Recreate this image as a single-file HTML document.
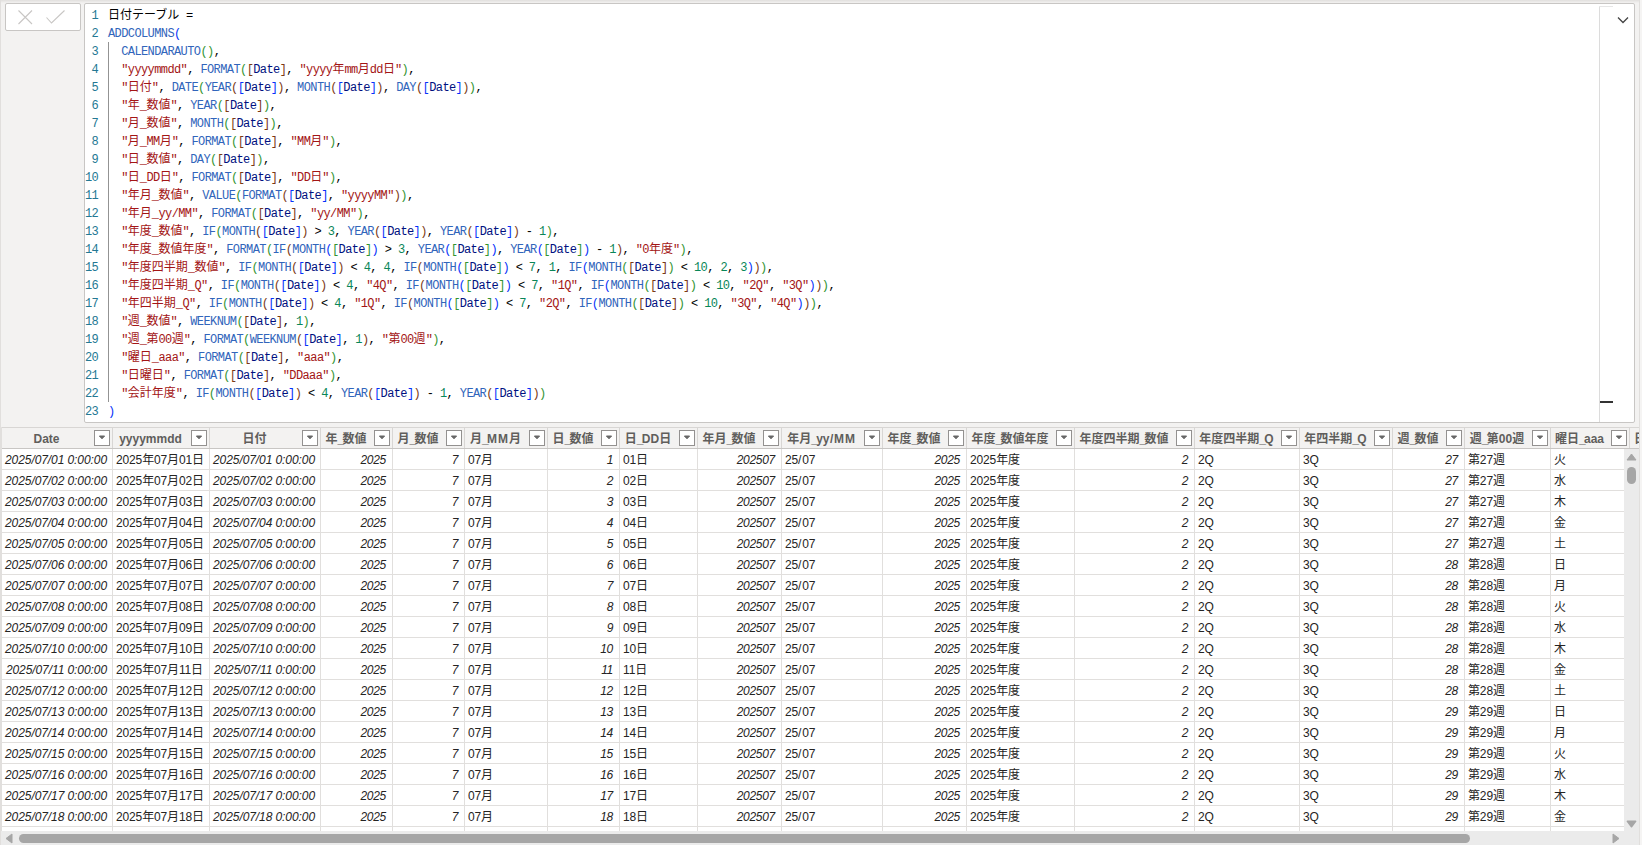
<!DOCTYPE html>
<html lang="ja"><head><meta charset="utf-8"><title>日付テーブル</title>
<style>
*{box-sizing:border-box;margin:0;padding:0}
html,body{width:1642px;height:845px;overflow:hidden;background:#f3f2f1}
body{position:relative;font-family:"Liberation Sans","Noto Sans CJK JP",sans-serif;font-size:12px;color:#252423}
.abs{position:absolute}
#topgrad{left:0;top:0;width:1642px;height:3px;background:linear-gradient(#e1dfdd,#f3f2f1)}
#lstrip{left:0;top:0;width:1px;height:845px;background:#e1dfdd}
#rstrip{left:1639px;top:0;width:1px;height:845px;background:#e1dfdd}
#rstrip2{left:1640px;top:0;width:2px;height:845px;background:#f5f4f3}
#btnbox{left:5px;top:3px;width:76px;height:28px;background:#fff;border:1px solid #c8c6c4;border-radius:2px}
#editor{left:84px;top:3px;width:1551px;height:420px;background:#fff;border:1px solid #c8c6c4;border-radius:2px;overflow:hidden}
.ln{position:absolute;left:0;width:13px;text-align:right;color:#237893}
.cl{position:absolute;left:23px;white-space:pre;color:#000}
.code{font-family:"Liberation Mono","Noto Sans CJK JP",monospace;font-size:12px;letter-spacing:-0.6px;line-height:18px;height:18px}
.code .j{letter-spacing:0;line-height:0;font-family:"Noto Sans CJK JP",sans-serif}
.f{color:#3165bb}.s{color:#a31515}.n{color:#098658}.c{color:#001080}.k{color:#000}
.b1{color:#0431fa}.b2{color:#319331}.b3{color:#7b3814}
#guide{left:23px;top:38px;width:1px;height:360px;background:#939393}
#ruler{left:1514px;top:2px;width:1px;height:417px;background:#dcdcdc}
#rulertop{left:1514px;top:2px;width:14px;height:1px;background:#e6e6e6}
#cursor{left:1515px;top:397px;width:13px;height:2px;background:#333}
#grid{left:1px;top:427px;width:1638px;height:404px;overflow:hidden;background:#fff;border-left:1px solid #e1dfdd}
.hrow{position:absolute;left:0;top:0;width:1638px;height:22px;background:#f3f2f1;border-top:1px solid #d8d6d4;border-bottom:1px solid #c8c6c4}
.hc{position:absolute;top:1px;height:20px;line-height:20px;font-weight:bold;color:#605e5c;white-space:nowrap;overflow:hidden;text-align:center}
.hb{position:absolute;top:0;width:1px;height:20px;background:#d8d6d4}
.dd{position:absolute;top:2px;width:16px;height:16px;background:#fff;border:1px solid #939190}
.dd svg{position:absolute;left:3px;top:4px}
.row{position:absolute;left:0;width:1623px;height:21px;border-bottom:1px solid #e1dfdd}
.c_{position:absolute;top:0;height:20px;line-height:22px;white-space:nowrap;overflow:hidden;border-right:1px solid #e1dfdd}
.r{text-align:right;font-style:italic;padding-right:5px;letter-spacing:-0.08px}
.r.num{padding-right:6px;letter-spacing:-0.3px}
.hc u{text-decoration:none;letter-spacing:-1.7px}.hc b{letter-spacing:0.6px;margin-left:0.6px}.hc i{font-style:normal;letter-spacing:0.9px}.l b{font-weight:normal;letter-spacing:0.8px}
.l{text-align:left;padding-left:3px;letter-spacing:-0.14px}
#vsb{left:1624px;top:449px;width:15px;height:382px;background:#ebebeb}
#hsb{left:1px;top:831px;width:1638px;height:14px;background:#ebebeb}
.thumb{position:absolute;background:#a6a6a6;border-radius:5px}
</style></head><body>
<div class="abs" id="topgrad"></div><div class="abs" id="lstrip"></div><div class="abs" id="rstrip"></div><div class="abs" id="rstrip2"></div>
<div class="abs" id="btnbox">
<svg class="abs" style="left:0;top:0" width="74" height="26" viewBox="0 0 74 26"><g stroke="#c8c6c4" stroke-width="1.1" fill="none"><path d="M12.5 6.5 L26 20 M26 6.5 L12.5 20"/><path d="M40.5 13.5 L45.5 19 L58.5 6.5"/></g></svg>
</div>
<div class="abs" id="editor">
<div class="ln code" style="top:3px">1</div><div class="cl code" style="top:3px"><span class="k"><span class="j">日付テーブル</span> =</span></div>
<div class="ln code" style="top:21px">2</div><div class="cl code" style="top:21px"><span class="f">ADDCOLUMNS</span><span class="b1">(</span></div>
<div class="ln code" style="top:39px">3</div><div class="cl code" style="top:39px">  <span class="f">CALENDARAUTO</span><span class="b2">(</span><span class="b2">)</span>,</div>
<div class="ln code" style="top:57px">4</div><div class="cl code" style="top:57px">  <span class="s">&quot;yyyymmdd&quot;</span>, <span class="f">FORMAT</span><span class="b2">(</span><span class="b3">[</span><span class="c">Date</span><span class="b3">]</span>, <span class="s">&quot;yyyy<span class="j">年</span>mm<span class="j">月</span>dd<span class="j">日</span>&quot;</span><span class="b2">)</span>,</div>
<div class="ln code" style="top:75px">5</div><div class="cl code" style="top:75px">  <span class="s">&quot;<span class="j">日付</span>&quot;</span>, <span class="f">DATE</span><span class="b2">(</span><span class="f">YEAR</span><span class="b3">(</span><span class="b1">[</span><span class="c">Date</span><span class="b1">]</span><span class="b3">)</span>, <span class="f">MONTH</span><span class="b3">(</span><span class="b1">[</span><span class="c">Date</span><span class="b1">]</span><span class="b3">)</span>, <span class="f">DAY</span><span class="b3">(</span><span class="b1">[</span><span class="c">Date</span><span class="b1">]</span><span class="b3">)</span><span class="b2">)</span>,</div>
<div class="ln code" style="top:93px">6</div><div class="cl code" style="top:93px">  <span class="s">&quot;<span class="j">年</span>_<span class="j">数値</span>&quot;</span>, <span class="f">YEAR</span><span class="b2">(</span><span class="b3">[</span><span class="c">Date</span><span class="b3">]</span><span class="b2">)</span>,</div>
<div class="ln code" style="top:111px">7</div><div class="cl code" style="top:111px">  <span class="s">&quot;<span class="j">月</span>_<span class="j">数値</span>&quot;</span>, <span class="f">MONTH</span><span class="b2">(</span><span class="b3">[</span><span class="c">Date</span><span class="b3">]</span><span class="b2">)</span>,</div>
<div class="ln code" style="top:129px">8</div><div class="cl code" style="top:129px">  <span class="s">&quot;<span class="j">月</span>_MM<span class="j">月</span>&quot;</span>, <span class="f">FORMAT</span><span class="b2">(</span><span class="b3">[</span><span class="c">Date</span><span class="b3">]</span>, <span class="s">&quot;MM<span class="j">月</span>&quot;</span><span class="b2">)</span>,</div>
<div class="ln code" style="top:147px">9</div><div class="cl code" style="top:147px">  <span class="s">&quot;<span class="j">日</span>_<span class="j">数値</span>&quot;</span>, <span class="f">DAY</span><span class="b2">(</span><span class="b3">[</span><span class="c">Date</span><span class="b3">]</span><span class="b2">)</span>,</div>
<div class="ln code" style="top:165px">10</div><div class="cl code" style="top:165px">  <span class="s">&quot;<span class="j">日</span>_DD<span class="j">日</span>&quot;</span>, <span class="f">FORMAT</span><span class="b2">(</span><span class="b3">[</span><span class="c">Date</span><span class="b3">]</span>, <span class="s">&quot;DD<span class="j">日</span>&quot;</span><span class="b2">)</span>,</div>
<div class="ln code" style="top:183px">11</div><div class="cl code" style="top:183px">  <span class="s">&quot;<span class="j">年月</span>_<span class="j">数値</span>&quot;</span>, <span class="f">VALUE</span><span class="b2">(</span><span class="f">FORMAT</span><span class="b3">(</span><span class="b1">[</span><span class="c">Date</span><span class="b1">]</span>, <span class="s">&quot;yyyyMM&quot;</span><span class="b3">)</span><span class="b2">)</span>,</div>
<div class="ln code" style="top:201px">12</div><div class="cl code" style="top:201px">  <span class="s">&quot;<span class="j">年月</span>_yy/MM&quot;</span>, <span class="f">FORMAT</span><span class="b2">(</span><span class="b3">[</span><span class="c">Date</span><span class="b3">]</span>, <span class="s">&quot;yy/MM&quot;</span><span class="b2">)</span>,</div>
<div class="ln code" style="top:219px">13</div><div class="cl code" style="top:219px">  <span class="s">&quot;<span class="j">年度</span>_<span class="j">数値</span>&quot;</span>, <span class="f">IF</span><span class="b2">(</span><span class="f">MONTH</span><span class="b3">(</span><span class="b1">[</span><span class="c">Date</span><span class="b1">]</span><span class="b3">)</span> &gt; <span class="n">3</span>, <span class="f">YEAR</span><span class="b3">(</span><span class="b1">[</span><span class="c">Date</span><span class="b1">]</span><span class="b3">)</span>, <span class="f">YEAR</span><span class="b3">(</span><span class="b1">[</span><span class="c">Date</span><span class="b1">]</span><span class="b3">)</span> - <span class="n">1</span><span class="b2">)</span>,</div>
<div class="ln code" style="top:237px">14</div><div class="cl code" style="top:237px">  <span class="s">&quot;<span class="j">年度</span>_<span class="j">数値年度</span>&quot;</span>, <span class="f">FORMAT</span><span class="b2">(</span><span class="f">IF</span><span class="b3">(</span><span class="f">MONTH</span><span class="b1">(</span><span class="b2">[</span><span class="c">Date</span><span class="b2">]</span><span class="b1">)</span> &gt; <span class="n">3</span>, <span class="f">YEAR</span><span class="b1">(</span><span class="b2">[</span><span class="c">Date</span><span class="b2">]</span><span class="b1">)</span>, <span class="f">YEAR</span><span class="b1">(</span><span class="b2">[</span><span class="c">Date</span><span class="b2">]</span><span class="b1">)</span> - <span class="n">1</span><span class="b3">)</span>, <span class="s">&quot;0<span class="j">年度</span>&quot;</span><span class="b2">)</span>,</div>
<div class="ln code" style="top:255px">15</div><div class="cl code" style="top:255px">  <span class="s">&quot;<span class="j">年度四半期</span>_<span class="j">数値</span>&quot;</span>, <span class="f">IF</span><span class="b2">(</span><span class="f">MONTH</span><span class="b3">(</span><span class="b1">[</span><span class="c">Date</span><span class="b1">]</span><span class="b3">)</span> &lt; <span class="n">4</span>, <span class="n">4</span>, <span class="f">IF</span><span class="b3">(</span><span class="f">MONTH</span><span class="b1">(</span><span class="b2">[</span><span class="c">Date</span><span class="b2">]</span><span class="b1">)</span> &lt; <span class="n">7</span>, <span class="n">1</span>, <span class="f">IF</span><span class="b1">(</span><span class="f">MONTH</span><span class="b2">(</span><span class="b3">[</span><span class="c">Date</span><span class="b3">]</span><span class="b2">)</span> &lt; <span class="n">10</span>, <span class="n">2</span>, <span class="n">3</span><span class="b1">)</span><span class="b3">)</span><span class="b2">)</span>,</div>
<div class="ln code" style="top:273px">16</div><div class="cl code" style="top:273px">  <span class="s">&quot;<span class="j">年度四半期</span>_Q&quot;</span>, <span class="f">IF</span><span class="b2">(</span><span class="f">MONTH</span><span class="b3">(</span><span class="b1">[</span><span class="c">Date</span><span class="b1">]</span><span class="b3">)</span> &lt; <span class="n">4</span>, <span class="s">&quot;4Q&quot;</span>, <span class="f">IF</span><span class="b3">(</span><span class="f">MONTH</span><span class="b1">(</span><span class="b2">[</span><span class="c">Date</span><span class="b2">]</span><span class="b1">)</span> &lt; <span class="n">7</span>, <span class="s">&quot;1Q&quot;</span>, <span class="f">IF</span><span class="b1">(</span><span class="f">MONTH</span><span class="b2">(</span><span class="b3">[</span><span class="c">Date</span><span class="b3">]</span><span class="b2">)</span> &lt; <span class="n">10</span>, <span class="s">&quot;2Q&quot;</span>, <span class="s">&quot;3Q&quot;</span><span class="b1">)</span><span class="b3">)</span><span class="b2">)</span>,</div>
<div class="ln code" style="top:291px">17</div><div class="cl code" style="top:291px">  <span class="s">&quot;<span class="j">年四半期</span>_Q&quot;</span>, <span class="f">IF</span><span class="b2">(</span><span class="f">MONTH</span><span class="b3">(</span><span class="b1">[</span><span class="c">Date</span><span class="b1">]</span><span class="b3">)</span> &lt; <span class="n">4</span>, <span class="s">&quot;1Q&quot;</span>, <span class="f">IF</span><span class="b3">(</span><span class="f">MONTH</span><span class="b1">(</span><span class="b2">[</span><span class="c">Date</span><span class="b2">]</span><span class="b1">)</span> &lt; <span class="n">7</span>, <span class="s">&quot;2Q&quot;</span>, <span class="f">IF</span><span class="b1">(</span><span class="f">MONTH</span><span class="b2">(</span><span class="b3">[</span><span class="c">Date</span><span class="b3">]</span><span class="b2">)</span> &lt; <span class="n">10</span>, <span class="s">&quot;3Q&quot;</span>, <span class="s">&quot;4Q&quot;</span><span class="b1">)</span><span class="b3">)</span><span class="b2">)</span>,</div>
<div class="ln code" style="top:309px">18</div><div class="cl code" style="top:309px">  <span class="s">&quot;<span class="j">週</span>_<span class="j">数値</span>&quot;</span>, <span class="f">WEEKNUM</span><span class="b2">(</span><span class="b3">[</span><span class="c">Date</span><span class="b3">]</span>, <span class="n">1</span><span class="b2">)</span>,</div>
<div class="ln code" style="top:327px">19</div><div class="cl code" style="top:327px">  <span class="s">&quot;<span class="j">週</span>_<span class="j">第</span>00<span class="j">週</span>&quot;</span>, <span class="f">FORMAT</span><span class="b2">(</span><span class="f">WEEKNUM</span><span class="b3">(</span><span class="b1">[</span><span class="c">Date</span><span class="b1">]</span>, <span class="n">1</span><span class="b3">)</span>, <span class="s">&quot;<span class="j">第</span>00<span class="j">週</span>&quot;</span><span class="b2">)</span>,</div>
<div class="ln code" style="top:345px">20</div><div class="cl code" style="top:345px">  <span class="s">&quot;<span class="j">曜日</span>_aaa&quot;</span>, <span class="f">FORMAT</span><span class="b2">(</span><span class="b3">[</span><span class="c">Date</span><span class="b3">]</span>, <span class="s">&quot;aaa&quot;</span><span class="b2">)</span>,</div>
<div class="ln code" style="top:363px">21</div><div class="cl code" style="top:363px">  <span class="s">&quot;<span class="j">日曜日</span>&quot;</span>, <span class="f">FORMAT</span><span class="b2">(</span><span class="b3">[</span><span class="c">Date</span><span class="b3">]</span>, <span class="s">&quot;DDaaa&quot;</span><span class="b2">)</span>,</div>
<div class="ln code" style="top:381px">22</div><div class="cl code" style="top:381px">  <span class="s">&quot;<span class="j">会計年度</span>&quot;</span>, <span class="f">IF</span><span class="b2">(</span><span class="f">MONTH</span><span class="b3">(</span><span class="b1">[</span><span class="c">Date</span><span class="b1">]</span><span class="b3">)</span> &lt; <span class="n">4</span>, <span class="f">YEAR</span><span class="b3">(</span><span class="b1">[</span><span class="c">Date</span><span class="b1">]</span><span class="b3">)</span> - <span class="n">1</span>, <span class="f">YEAR</span><span class="b3">(</span><span class="b1">[</span><span class="c">Date</span><span class="b1">]</span><span class="b3">)</span><span class="b2">)</span></div>
<div class="ln code" style="top:399px">23</div><div class="cl code" style="top:399px"><span class="b1">)</span></div>
<div class="abs" id="guide"></div><div class="abs" id="ruler"></div><div class="abs" id="rulertop"></div><div class="abs" id="cursor"></div>
<svg class="abs" style="left:1531px;top:11px" width="14" height="10" viewBox="0 0 14 10"><path d="M2 2.5 L7 7.5 L12 2.5" stroke="#444" stroke-width="1.3" fill="none"/></svg>
</div>
<div class="abs" id="grid">
<div class="hrow">
<div class="hc" style="left:0px;width:89px">Date</div><div class="dd" style="left:92px"><svg width="8" height="5" viewBox="0 0 8 5"><path d="M1.4 1 L6.6 1 L4 3.8 Z" fill="#666" stroke="#666" stroke-width="1" stroke-linejoin="round"/></svg></div><div class="hb" style="left:110px"></div>
<div class="hc" style="left:111px;width:75px">yyyymmdd</div><div class="dd" style="left:189px"><svg width="8" height="5" viewBox="0 0 8 5"><path d="M1.4 1 L6.6 1 L4 3.8 Z" fill="#666" stroke="#666" stroke-width="1" stroke-linejoin="round"/></svg></div><div class="hb" style="left:207px"></div>
<div class="hc" style="left:208px;width:89px">日付</div><div class="dd" style="left:300px"><svg width="8" height="5" viewBox="0 0 8 5"><path d="M1.4 1 L6.6 1 L4 3.8 Z" fill="#666" stroke="#666" stroke-width="1" stroke-linejoin="round"/></svg></div><div class="hb" style="left:318px"></div>
<div class="hc" style="left:319px;width:50px">年<u>_</u>数値</div><div class="dd" style="left:372px"><svg width="8" height="5" viewBox="0 0 8 5"><path d="M1.4 1 L6.6 1 L4 3.8 Z" fill="#666" stroke="#666" stroke-width="1" stroke-linejoin="round"/></svg></div><div class="hb" style="left:390px"></div>
<div class="hc" style="left:391px;width:50px">月<u>_</u>数値</div><div class="dd" style="left:444px"><svg width="8" height="5" viewBox="0 0 8 5"><path d="M1.4 1 L6.6 1 L4 3.8 Z" fill="#666" stroke="#666" stroke-width="1" stroke-linejoin="round"/></svg></div><div class="hb" style="left:462px"></div>
<div class="hc" style="left:463px;width:61px">月<u>_</u><i>M</i><i>M</i>月</div><div class="dd" style="left:527px"><svg width="8" height="5" viewBox="0 0 8 5"><path d="M1.4 1 L6.6 1 L4 3.8 Z" fill="#666" stroke="#666" stroke-width="1" stroke-linejoin="round"/></svg></div><div class="hb" style="left:545px"></div>
<div class="hc" style="left:546px;width:50px">日<u>_</u>数値</div><div class="dd" style="left:599px"><svg width="8" height="5" viewBox="0 0 8 5"><path d="M1.4 1 L6.6 1 L4 3.8 Z" fill="#666" stroke="#666" stroke-width="1" stroke-linejoin="round"/></svg></div><div class="hb" style="left:617px"></div>
<div class="hc" style="left:618px;width:56px">日<u>_</u>DD日</div><div class="dd" style="left:677px"><svg width="8" height="5" viewBox="0 0 8 5"><path d="M1.4 1 L6.6 1 L4 3.8 Z" fill="#666" stroke="#666" stroke-width="1" stroke-linejoin="round"/></svg></div><div class="hb" style="left:695px"></div>
<div class="hc" style="left:696px;width:62px">年月<u>_</u>数値</div><div class="dd" style="left:761px"><svg width="8" height="5" viewBox="0 0 8 5"><path d="M1.4 1 L6.6 1 L4 3.8 Z" fill="#666" stroke="#666" stroke-width="1" stroke-linejoin="round"/></svg></div><div class="hb" style="left:779px"></div>
<div class="hc" style="left:780px;width:79px">年月<u>_</u>yy<b>/</b><i>M</i><i>M</i></div><div class="dd" style="left:862px"><svg width="8" height="5" viewBox="0 0 8 5"><path d="M1.4 1 L6.6 1 L4 3.8 Z" fill="#666" stroke="#666" stroke-width="1" stroke-linejoin="round"/></svg></div><div class="hb" style="left:880px"></div>
<div class="hc" style="left:881px;width:62px">年度<u>_</u>数値</div><div class="dd" style="left:946px"><svg width="8" height="5" viewBox="0 0 8 5"><path d="M1.4 1 L6.6 1 L4 3.8 Z" fill="#666" stroke="#666" stroke-width="1" stroke-linejoin="round"/></svg></div><div class="hb" style="left:964px"></div>
<div class="hc" style="left:965px;width:86px">年度<u>_</u>数値年度</div><div class="dd" style="left:1054px"><svg width="8" height="5" viewBox="0 0 8 5"><path d="M1.4 1 L6.6 1 L4 3.8 Z" fill="#666" stroke="#666" stroke-width="1" stroke-linejoin="round"/></svg></div><div class="hb" style="left:1072px"></div>
<div class="hc" style="left:1073px;width:98px">年度四半期<u>_</u>数値</div><div class="dd" style="left:1174px"><svg width="8" height="5" viewBox="0 0 8 5"><path d="M1.4 1 L6.6 1 L4 3.8 Z" fill="#666" stroke="#666" stroke-width="1" stroke-linejoin="round"/></svg></div><div class="hb" style="left:1192px"></div>
<div class="hc" style="left:1193px;width:83px">年度四半期<u>_</u>Q</div><div class="dd" style="left:1279px"><svg width="8" height="5" viewBox="0 0 8 5"><path d="M1.4 1 L6.6 1 L4 3.8 Z" fill="#666" stroke="#666" stroke-width="1" stroke-linejoin="round"/></svg></div><div class="hb" style="left:1297px"></div>
<div class="hc" style="left:1298px;width:71px">年四半期<u>_</u>Q</div><div class="dd" style="left:1372px"><svg width="8" height="5" viewBox="0 0 8 5"><path d="M1.4 1 L6.6 1 L4 3.8 Z" fill="#666" stroke="#666" stroke-width="1" stroke-linejoin="round"/></svg></div><div class="hb" style="left:1390px"></div>
<div class="hc" style="left:1391px;width:50px">週<u>_</u>数値</div><div class="dd" style="left:1444px"><svg width="8" height="5" viewBox="0 0 8 5"><path d="M1.4 1 L6.6 1 L4 3.8 Z" fill="#666" stroke="#666" stroke-width="1" stroke-linejoin="round"/></svg></div><div class="hb" style="left:1462px"></div>
<div class="hc" style="left:1463px;width:64px">週<u>_</u>第00週</div><div class="dd" style="left:1530px"><svg width="8" height="5" viewBox="0 0 8 5"><path d="M1.4 1 L6.6 1 L4 3.8 Z" fill="#666" stroke="#666" stroke-width="1" stroke-linejoin="round"/></svg></div><div class="hb" style="left:1548px"></div>
<div class="hc" style="left:1549px;width:57px">曜日<u>_</u>aaa</div><div class="dd" style="left:1609px"><svg width="8" height="5" viewBox="0 0 8 5"><path d="M1.4 1 L6.6 1 L4 3.8 Z" fill="#666" stroke="#666" stroke-width="1" stroke-linejoin="round"/></svg></div><div class="hb" style="left:1627px"></div>
<div class="hc" style="left:1628px;width:9px;text-align:left;padding-left:4px">日曜日</div></div>
<div class="row" style="top:22px"><div class="c_ r" style="left:0px;width:111px">2025/07/01 0:00:00</div><div class="c_ l" style="left:111px;width:97px">2025年07月01日</div><div class="c_ r" style="left:208px;width:111px">2025/07/01 0:00:00</div><div class="c_ r num" style="left:319px;width:72px">2025</div><div class="c_ r num" style="left:391px;width:72px">7</div><div class="c_ l" style="left:463px;width:83px">07月</div><div class="c_ r num" style="left:546px;width:72px">1</div><div class="c_ l" style="left:618px;width:78px">01日</div><div class="c_ r num" style="left:696px;width:84px">202507</div><div class="c_ l" style="left:780px;width:101px">25<b>/</b>07</div><div class="c_ r num" style="left:881px;width:84px">2025</div><div class="c_ l" style="left:965px;width:108px">2025年度</div><div class="c_ r num" style="left:1073px;width:120px">2</div><div class="c_ l" style="left:1193px;width:105px">2Q</div><div class="c_ l" style="left:1298px;width:93px">3Q</div><div class="c_ r num" style="left:1391px;width:72px">27</div><div class="c_ l" style="left:1463px;width:86px">第27週</div><div class="c_ l" style="left:1549px;width:79px">火</div><div class="c_ l" style="left:1628px;width:91px">01火</div></div>
<div class="row" style="top:43px"><div class="c_ r" style="left:0px;width:111px">2025/07/02 0:00:00</div><div class="c_ l" style="left:111px;width:97px">2025年07月02日</div><div class="c_ r" style="left:208px;width:111px">2025/07/02 0:00:00</div><div class="c_ r num" style="left:319px;width:72px">2025</div><div class="c_ r num" style="left:391px;width:72px">7</div><div class="c_ l" style="left:463px;width:83px">07月</div><div class="c_ r num" style="left:546px;width:72px">2</div><div class="c_ l" style="left:618px;width:78px">02日</div><div class="c_ r num" style="left:696px;width:84px">202507</div><div class="c_ l" style="left:780px;width:101px">25<b>/</b>07</div><div class="c_ r num" style="left:881px;width:84px">2025</div><div class="c_ l" style="left:965px;width:108px">2025年度</div><div class="c_ r num" style="left:1073px;width:120px">2</div><div class="c_ l" style="left:1193px;width:105px">2Q</div><div class="c_ l" style="left:1298px;width:93px">3Q</div><div class="c_ r num" style="left:1391px;width:72px">27</div><div class="c_ l" style="left:1463px;width:86px">第27週</div><div class="c_ l" style="left:1549px;width:79px">水</div><div class="c_ l" style="left:1628px;width:91px">02水</div></div>
<div class="row" style="top:64px"><div class="c_ r" style="left:0px;width:111px">2025/07/03 0:00:00</div><div class="c_ l" style="left:111px;width:97px">2025年07月03日</div><div class="c_ r" style="left:208px;width:111px">2025/07/03 0:00:00</div><div class="c_ r num" style="left:319px;width:72px">2025</div><div class="c_ r num" style="left:391px;width:72px">7</div><div class="c_ l" style="left:463px;width:83px">07月</div><div class="c_ r num" style="left:546px;width:72px">3</div><div class="c_ l" style="left:618px;width:78px">03日</div><div class="c_ r num" style="left:696px;width:84px">202507</div><div class="c_ l" style="left:780px;width:101px">25<b>/</b>07</div><div class="c_ r num" style="left:881px;width:84px">2025</div><div class="c_ l" style="left:965px;width:108px">2025年度</div><div class="c_ r num" style="left:1073px;width:120px">2</div><div class="c_ l" style="left:1193px;width:105px">2Q</div><div class="c_ l" style="left:1298px;width:93px">3Q</div><div class="c_ r num" style="left:1391px;width:72px">27</div><div class="c_ l" style="left:1463px;width:86px">第27週</div><div class="c_ l" style="left:1549px;width:79px">木</div><div class="c_ l" style="left:1628px;width:91px">03木</div></div>
<div class="row" style="top:85px"><div class="c_ r" style="left:0px;width:111px">2025/07/04 0:00:00</div><div class="c_ l" style="left:111px;width:97px">2025年07月04日</div><div class="c_ r" style="left:208px;width:111px">2025/07/04 0:00:00</div><div class="c_ r num" style="left:319px;width:72px">2025</div><div class="c_ r num" style="left:391px;width:72px">7</div><div class="c_ l" style="left:463px;width:83px">07月</div><div class="c_ r num" style="left:546px;width:72px">4</div><div class="c_ l" style="left:618px;width:78px">04日</div><div class="c_ r num" style="left:696px;width:84px">202507</div><div class="c_ l" style="left:780px;width:101px">25<b>/</b>07</div><div class="c_ r num" style="left:881px;width:84px">2025</div><div class="c_ l" style="left:965px;width:108px">2025年度</div><div class="c_ r num" style="left:1073px;width:120px">2</div><div class="c_ l" style="left:1193px;width:105px">2Q</div><div class="c_ l" style="left:1298px;width:93px">3Q</div><div class="c_ r num" style="left:1391px;width:72px">27</div><div class="c_ l" style="left:1463px;width:86px">第27週</div><div class="c_ l" style="left:1549px;width:79px">金</div><div class="c_ l" style="left:1628px;width:91px">04金</div></div>
<div class="row" style="top:106px"><div class="c_ r" style="left:0px;width:111px">2025/07/05 0:00:00</div><div class="c_ l" style="left:111px;width:97px">2025年07月05日</div><div class="c_ r" style="left:208px;width:111px">2025/07/05 0:00:00</div><div class="c_ r num" style="left:319px;width:72px">2025</div><div class="c_ r num" style="left:391px;width:72px">7</div><div class="c_ l" style="left:463px;width:83px">07月</div><div class="c_ r num" style="left:546px;width:72px">5</div><div class="c_ l" style="left:618px;width:78px">05日</div><div class="c_ r num" style="left:696px;width:84px">202507</div><div class="c_ l" style="left:780px;width:101px">25<b>/</b>07</div><div class="c_ r num" style="left:881px;width:84px">2025</div><div class="c_ l" style="left:965px;width:108px">2025年度</div><div class="c_ r num" style="left:1073px;width:120px">2</div><div class="c_ l" style="left:1193px;width:105px">2Q</div><div class="c_ l" style="left:1298px;width:93px">3Q</div><div class="c_ r num" style="left:1391px;width:72px">27</div><div class="c_ l" style="left:1463px;width:86px">第27週</div><div class="c_ l" style="left:1549px;width:79px">土</div><div class="c_ l" style="left:1628px;width:91px">05土</div></div>
<div class="row" style="top:127px"><div class="c_ r" style="left:0px;width:111px">2025/07/06 0:00:00</div><div class="c_ l" style="left:111px;width:97px">2025年07月06日</div><div class="c_ r" style="left:208px;width:111px">2025/07/06 0:00:00</div><div class="c_ r num" style="left:319px;width:72px">2025</div><div class="c_ r num" style="left:391px;width:72px">7</div><div class="c_ l" style="left:463px;width:83px">07月</div><div class="c_ r num" style="left:546px;width:72px">6</div><div class="c_ l" style="left:618px;width:78px">06日</div><div class="c_ r num" style="left:696px;width:84px">202507</div><div class="c_ l" style="left:780px;width:101px">25<b>/</b>07</div><div class="c_ r num" style="left:881px;width:84px">2025</div><div class="c_ l" style="left:965px;width:108px">2025年度</div><div class="c_ r num" style="left:1073px;width:120px">2</div><div class="c_ l" style="left:1193px;width:105px">2Q</div><div class="c_ l" style="left:1298px;width:93px">3Q</div><div class="c_ r num" style="left:1391px;width:72px">28</div><div class="c_ l" style="left:1463px;width:86px">第28週</div><div class="c_ l" style="left:1549px;width:79px">日</div><div class="c_ l" style="left:1628px;width:91px">06日</div></div>
<div class="row" style="top:148px"><div class="c_ r" style="left:0px;width:111px">2025/07/07 0:00:00</div><div class="c_ l" style="left:111px;width:97px">2025年07月07日</div><div class="c_ r" style="left:208px;width:111px">2025/07/07 0:00:00</div><div class="c_ r num" style="left:319px;width:72px">2025</div><div class="c_ r num" style="left:391px;width:72px">7</div><div class="c_ l" style="left:463px;width:83px">07月</div><div class="c_ r num" style="left:546px;width:72px">7</div><div class="c_ l" style="left:618px;width:78px">07日</div><div class="c_ r num" style="left:696px;width:84px">202507</div><div class="c_ l" style="left:780px;width:101px">25<b>/</b>07</div><div class="c_ r num" style="left:881px;width:84px">2025</div><div class="c_ l" style="left:965px;width:108px">2025年度</div><div class="c_ r num" style="left:1073px;width:120px">2</div><div class="c_ l" style="left:1193px;width:105px">2Q</div><div class="c_ l" style="left:1298px;width:93px">3Q</div><div class="c_ r num" style="left:1391px;width:72px">28</div><div class="c_ l" style="left:1463px;width:86px">第28週</div><div class="c_ l" style="left:1549px;width:79px">月</div><div class="c_ l" style="left:1628px;width:91px">07月</div></div>
<div class="row" style="top:169px"><div class="c_ r" style="left:0px;width:111px">2025/07/08 0:00:00</div><div class="c_ l" style="left:111px;width:97px">2025年07月08日</div><div class="c_ r" style="left:208px;width:111px">2025/07/08 0:00:00</div><div class="c_ r num" style="left:319px;width:72px">2025</div><div class="c_ r num" style="left:391px;width:72px">7</div><div class="c_ l" style="left:463px;width:83px">07月</div><div class="c_ r num" style="left:546px;width:72px">8</div><div class="c_ l" style="left:618px;width:78px">08日</div><div class="c_ r num" style="left:696px;width:84px">202507</div><div class="c_ l" style="left:780px;width:101px">25<b>/</b>07</div><div class="c_ r num" style="left:881px;width:84px">2025</div><div class="c_ l" style="left:965px;width:108px">2025年度</div><div class="c_ r num" style="left:1073px;width:120px">2</div><div class="c_ l" style="left:1193px;width:105px">2Q</div><div class="c_ l" style="left:1298px;width:93px">3Q</div><div class="c_ r num" style="left:1391px;width:72px">28</div><div class="c_ l" style="left:1463px;width:86px">第28週</div><div class="c_ l" style="left:1549px;width:79px">火</div><div class="c_ l" style="left:1628px;width:91px">08火</div></div>
<div class="row" style="top:190px"><div class="c_ r" style="left:0px;width:111px">2025/07/09 0:00:00</div><div class="c_ l" style="left:111px;width:97px">2025年07月09日</div><div class="c_ r" style="left:208px;width:111px">2025/07/09 0:00:00</div><div class="c_ r num" style="left:319px;width:72px">2025</div><div class="c_ r num" style="left:391px;width:72px">7</div><div class="c_ l" style="left:463px;width:83px">07月</div><div class="c_ r num" style="left:546px;width:72px">9</div><div class="c_ l" style="left:618px;width:78px">09日</div><div class="c_ r num" style="left:696px;width:84px">202507</div><div class="c_ l" style="left:780px;width:101px">25<b>/</b>07</div><div class="c_ r num" style="left:881px;width:84px">2025</div><div class="c_ l" style="left:965px;width:108px">2025年度</div><div class="c_ r num" style="left:1073px;width:120px">2</div><div class="c_ l" style="left:1193px;width:105px">2Q</div><div class="c_ l" style="left:1298px;width:93px">3Q</div><div class="c_ r num" style="left:1391px;width:72px">28</div><div class="c_ l" style="left:1463px;width:86px">第28週</div><div class="c_ l" style="left:1549px;width:79px">水</div><div class="c_ l" style="left:1628px;width:91px">09水</div></div>
<div class="row" style="top:211px"><div class="c_ r" style="left:0px;width:111px">2025/07/10 0:00:00</div><div class="c_ l" style="left:111px;width:97px">2025年07月10日</div><div class="c_ r" style="left:208px;width:111px">2025/07/10 0:00:00</div><div class="c_ r num" style="left:319px;width:72px">2025</div><div class="c_ r num" style="left:391px;width:72px">7</div><div class="c_ l" style="left:463px;width:83px">07月</div><div class="c_ r num" style="left:546px;width:72px">10</div><div class="c_ l" style="left:618px;width:78px">10日</div><div class="c_ r num" style="left:696px;width:84px">202507</div><div class="c_ l" style="left:780px;width:101px">25<b>/</b>07</div><div class="c_ r num" style="left:881px;width:84px">2025</div><div class="c_ l" style="left:965px;width:108px">2025年度</div><div class="c_ r num" style="left:1073px;width:120px">2</div><div class="c_ l" style="left:1193px;width:105px">2Q</div><div class="c_ l" style="left:1298px;width:93px">3Q</div><div class="c_ r num" style="left:1391px;width:72px">28</div><div class="c_ l" style="left:1463px;width:86px">第28週</div><div class="c_ l" style="left:1549px;width:79px">木</div><div class="c_ l" style="left:1628px;width:91px">10木</div></div>
<div class="row" style="top:232px"><div class="c_ r" style="left:0px;width:111px">2025/07/11 0:00:00</div><div class="c_ l" style="left:111px;width:97px">2025年07月11日</div><div class="c_ r" style="left:208px;width:111px">2025/07/11 0:00:00</div><div class="c_ r num" style="left:319px;width:72px">2025</div><div class="c_ r num" style="left:391px;width:72px">7</div><div class="c_ l" style="left:463px;width:83px">07月</div><div class="c_ r num" style="left:546px;width:72px">11</div><div class="c_ l" style="left:618px;width:78px">11日</div><div class="c_ r num" style="left:696px;width:84px">202507</div><div class="c_ l" style="left:780px;width:101px">25<b>/</b>07</div><div class="c_ r num" style="left:881px;width:84px">2025</div><div class="c_ l" style="left:965px;width:108px">2025年度</div><div class="c_ r num" style="left:1073px;width:120px">2</div><div class="c_ l" style="left:1193px;width:105px">2Q</div><div class="c_ l" style="left:1298px;width:93px">3Q</div><div class="c_ r num" style="left:1391px;width:72px">28</div><div class="c_ l" style="left:1463px;width:86px">第28週</div><div class="c_ l" style="left:1549px;width:79px">金</div><div class="c_ l" style="left:1628px;width:91px">11金</div></div>
<div class="row" style="top:253px"><div class="c_ r" style="left:0px;width:111px">2025/07/12 0:00:00</div><div class="c_ l" style="left:111px;width:97px">2025年07月12日</div><div class="c_ r" style="left:208px;width:111px">2025/07/12 0:00:00</div><div class="c_ r num" style="left:319px;width:72px">2025</div><div class="c_ r num" style="left:391px;width:72px">7</div><div class="c_ l" style="left:463px;width:83px">07月</div><div class="c_ r num" style="left:546px;width:72px">12</div><div class="c_ l" style="left:618px;width:78px">12日</div><div class="c_ r num" style="left:696px;width:84px">202507</div><div class="c_ l" style="left:780px;width:101px">25<b>/</b>07</div><div class="c_ r num" style="left:881px;width:84px">2025</div><div class="c_ l" style="left:965px;width:108px">2025年度</div><div class="c_ r num" style="left:1073px;width:120px">2</div><div class="c_ l" style="left:1193px;width:105px">2Q</div><div class="c_ l" style="left:1298px;width:93px">3Q</div><div class="c_ r num" style="left:1391px;width:72px">28</div><div class="c_ l" style="left:1463px;width:86px">第28週</div><div class="c_ l" style="left:1549px;width:79px">土</div><div class="c_ l" style="left:1628px;width:91px">12土</div></div>
<div class="row" style="top:274px"><div class="c_ r" style="left:0px;width:111px">2025/07/13 0:00:00</div><div class="c_ l" style="left:111px;width:97px">2025年07月13日</div><div class="c_ r" style="left:208px;width:111px">2025/07/13 0:00:00</div><div class="c_ r num" style="left:319px;width:72px">2025</div><div class="c_ r num" style="left:391px;width:72px">7</div><div class="c_ l" style="left:463px;width:83px">07月</div><div class="c_ r num" style="left:546px;width:72px">13</div><div class="c_ l" style="left:618px;width:78px">13日</div><div class="c_ r num" style="left:696px;width:84px">202507</div><div class="c_ l" style="left:780px;width:101px">25<b>/</b>07</div><div class="c_ r num" style="left:881px;width:84px">2025</div><div class="c_ l" style="left:965px;width:108px">2025年度</div><div class="c_ r num" style="left:1073px;width:120px">2</div><div class="c_ l" style="left:1193px;width:105px">2Q</div><div class="c_ l" style="left:1298px;width:93px">3Q</div><div class="c_ r num" style="left:1391px;width:72px">29</div><div class="c_ l" style="left:1463px;width:86px">第29週</div><div class="c_ l" style="left:1549px;width:79px">日</div><div class="c_ l" style="left:1628px;width:91px">13日</div></div>
<div class="row" style="top:295px"><div class="c_ r" style="left:0px;width:111px">2025/07/14 0:00:00</div><div class="c_ l" style="left:111px;width:97px">2025年07月14日</div><div class="c_ r" style="left:208px;width:111px">2025/07/14 0:00:00</div><div class="c_ r num" style="left:319px;width:72px">2025</div><div class="c_ r num" style="left:391px;width:72px">7</div><div class="c_ l" style="left:463px;width:83px">07月</div><div class="c_ r num" style="left:546px;width:72px">14</div><div class="c_ l" style="left:618px;width:78px">14日</div><div class="c_ r num" style="left:696px;width:84px">202507</div><div class="c_ l" style="left:780px;width:101px">25<b>/</b>07</div><div class="c_ r num" style="left:881px;width:84px">2025</div><div class="c_ l" style="left:965px;width:108px">2025年度</div><div class="c_ r num" style="left:1073px;width:120px">2</div><div class="c_ l" style="left:1193px;width:105px">2Q</div><div class="c_ l" style="left:1298px;width:93px">3Q</div><div class="c_ r num" style="left:1391px;width:72px">29</div><div class="c_ l" style="left:1463px;width:86px">第29週</div><div class="c_ l" style="left:1549px;width:79px">月</div><div class="c_ l" style="left:1628px;width:91px">14月</div></div>
<div class="row" style="top:316px"><div class="c_ r" style="left:0px;width:111px">2025/07/15 0:00:00</div><div class="c_ l" style="left:111px;width:97px">2025年07月15日</div><div class="c_ r" style="left:208px;width:111px">2025/07/15 0:00:00</div><div class="c_ r num" style="left:319px;width:72px">2025</div><div class="c_ r num" style="left:391px;width:72px">7</div><div class="c_ l" style="left:463px;width:83px">07月</div><div class="c_ r num" style="left:546px;width:72px">15</div><div class="c_ l" style="left:618px;width:78px">15日</div><div class="c_ r num" style="left:696px;width:84px">202507</div><div class="c_ l" style="left:780px;width:101px">25<b>/</b>07</div><div class="c_ r num" style="left:881px;width:84px">2025</div><div class="c_ l" style="left:965px;width:108px">2025年度</div><div class="c_ r num" style="left:1073px;width:120px">2</div><div class="c_ l" style="left:1193px;width:105px">2Q</div><div class="c_ l" style="left:1298px;width:93px">3Q</div><div class="c_ r num" style="left:1391px;width:72px">29</div><div class="c_ l" style="left:1463px;width:86px">第29週</div><div class="c_ l" style="left:1549px;width:79px">火</div><div class="c_ l" style="left:1628px;width:91px">15火</div></div>
<div class="row" style="top:337px"><div class="c_ r" style="left:0px;width:111px">2025/07/16 0:00:00</div><div class="c_ l" style="left:111px;width:97px">2025年07月16日</div><div class="c_ r" style="left:208px;width:111px">2025/07/16 0:00:00</div><div class="c_ r num" style="left:319px;width:72px">2025</div><div class="c_ r num" style="left:391px;width:72px">7</div><div class="c_ l" style="left:463px;width:83px">07月</div><div class="c_ r num" style="left:546px;width:72px">16</div><div class="c_ l" style="left:618px;width:78px">16日</div><div class="c_ r num" style="left:696px;width:84px">202507</div><div class="c_ l" style="left:780px;width:101px">25<b>/</b>07</div><div class="c_ r num" style="left:881px;width:84px">2025</div><div class="c_ l" style="left:965px;width:108px">2025年度</div><div class="c_ r num" style="left:1073px;width:120px">2</div><div class="c_ l" style="left:1193px;width:105px">2Q</div><div class="c_ l" style="left:1298px;width:93px">3Q</div><div class="c_ r num" style="left:1391px;width:72px">29</div><div class="c_ l" style="left:1463px;width:86px">第29週</div><div class="c_ l" style="left:1549px;width:79px">水</div><div class="c_ l" style="left:1628px;width:91px">16水</div></div>
<div class="row" style="top:358px"><div class="c_ r" style="left:0px;width:111px">2025/07/17 0:00:00</div><div class="c_ l" style="left:111px;width:97px">2025年07月17日</div><div class="c_ r" style="left:208px;width:111px">2025/07/17 0:00:00</div><div class="c_ r num" style="left:319px;width:72px">2025</div><div class="c_ r num" style="left:391px;width:72px">7</div><div class="c_ l" style="left:463px;width:83px">07月</div><div class="c_ r num" style="left:546px;width:72px">17</div><div class="c_ l" style="left:618px;width:78px">17日</div><div class="c_ r num" style="left:696px;width:84px">202507</div><div class="c_ l" style="left:780px;width:101px">25<b>/</b>07</div><div class="c_ r num" style="left:881px;width:84px">2025</div><div class="c_ l" style="left:965px;width:108px">2025年度</div><div class="c_ r num" style="left:1073px;width:120px">2</div><div class="c_ l" style="left:1193px;width:105px">2Q</div><div class="c_ l" style="left:1298px;width:93px">3Q</div><div class="c_ r num" style="left:1391px;width:72px">29</div><div class="c_ l" style="left:1463px;width:86px">第29週</div><div class="c_ l" style="left:1549px;width:79px">木</div><div class="c_ l" style="left:1628px;width:91px">17木</div></div>
<div class="row" style="top:379px"><div class="c_ r" style="left:0px;width:111px">2025/07/18 0:00:00</div><div class="c_ l" style="left:111px;width:97px">2025年07月18日</div><div class="c_ r" style="left:208px;width:111px">2025/07/18 0:00:00</div><div class="c_ r num" style="left:319px;width:72px">2025</div><div class="c_ r num" style="left:391px;width:72px">7</div><div class="c_ l" style="left:463px;width:83px">07月</div><div class="c_ r num" style="left:546px;width:72px">18</div><div class="c_ l" style="left:618px;width:78px">18日</div><div class="c_ r num" style="left:696px;width:84px">202507</div><div class="c_ l" style="left:780px;width:101px">25<b>/</b>07</div><div class="c_ r num" style="left:881px;width:84px">2025</div><div class="c_ l" style="left:965px;width:108px">2025年度</div><div class="c_ r num" style="left:1073px;width:120px">2</div><div class="c_ l" style="left:1193px;width:105px">2Q</div><div class="c_ l" style="left:1298px;width:93px">3Q</div><div class="c_ r num" style="left:1391px;width:72px">29</div><div class="c_ l" style="left:1463px;width:86px">第29週</div><div class="c_ l" style="left:1549px;width:79px">金</div><div class="c_ l" style="left:1628px;width:91px">18金</div></div>
<div class="row" style="top:400px"><div class="c_ r" style="left:0px;width:111px">2025/07/19 0:00:00</div><div class="c_ l" style="left:111px;width:97px">2025年07月19日</div><div class="c_ r" style="left:208px;width:111px">2025/07/19 0:00:00</div><div class="c_ r num" style="left:319px;width:72px">2025</div><div class="c_ r num" style="left:391px;width:72px">7</div><div class="c_ l" style="left:463px;width:83px">07月</div><div class="c_ r num" style="left:546px;width:72px">19</div><div class="c_ l" style="left:618px;width:78px">19日</div><div class="c_ r num" style="left:696px;width:84px">202507</div><div class="c_ l" style="left:780px;width:101px">25<b>/</b>07</div><div class="c_ r num" style="left:881px;width:84px">2025</div><div class="c_ l" style="left:965px;width:108px">2025年度</div><div class="c_ r num" style="left:1073px;width:120px">2</div><div class="c_ l" style="left:1193px;width:105px">2Q</div><div class="c_ l" style="left:1298px;width:93px">3Q</div><div class="c_ r num" style="left:1391px;width:72px">29</div><div class="c_ l" style="left:1463px;width:86px">第29週</div><div class="c_ l" style="left:1549px;width:79px">土</div><div class="c_ l" style="left:1628px;width:91px">19土</div></div>
</div>
<div class="abs" id="vsb">
<svg class="abs" style="left:2px;top:4px" width="11" height="8" viewBox="0 0 11 8"><path d="M5.5 1 L10 7 L1 7 Z" fill="#a6a6a6" stroke="#a6a6a6" stroke-width="1" stroke-linejoin="round"/></svg>
<div class="thumb" style="left:3px;top:18px;width:9px;height:17px"></div>
<svg class="abs" style="left:2px;top:371px" width="11" height="8" viewBox="0 0 11 8"><path d="M1.4 1.3 L9.6 1.3 L5.5 6.7 Z" fill="#a6a6a6" stroke="#a6a6a6" stroke-width="1.6" stroke-linejoin="round"/></svg>
</div>
<div class="abs" id="hsb">
<svg class="abs" style="left:4px;top:2px" width="8" height="11" viewBox="0 0 8 11"><path d="M1 5.5 L7 1 L7 10 Z" fill="#a6a6a6" stroke="#a6a6a6" stroke-width="1" stroke-linejoin="round"/></svg>
<div class="thumb" style="left:18px;top:3px;width:1451px;height:9px"></div>
<svg class="abs" style="left:1611px;top:2px" width="8" height="11" viewBox="0 0 8 11"><path d="M1 1 L7 5.5 L1 10 Z" fill="#a6a6a6" stroke="#a6a6a6" stroke-width="1" stroke-linejoin="round"/></svg>
</div>
</body></html>
